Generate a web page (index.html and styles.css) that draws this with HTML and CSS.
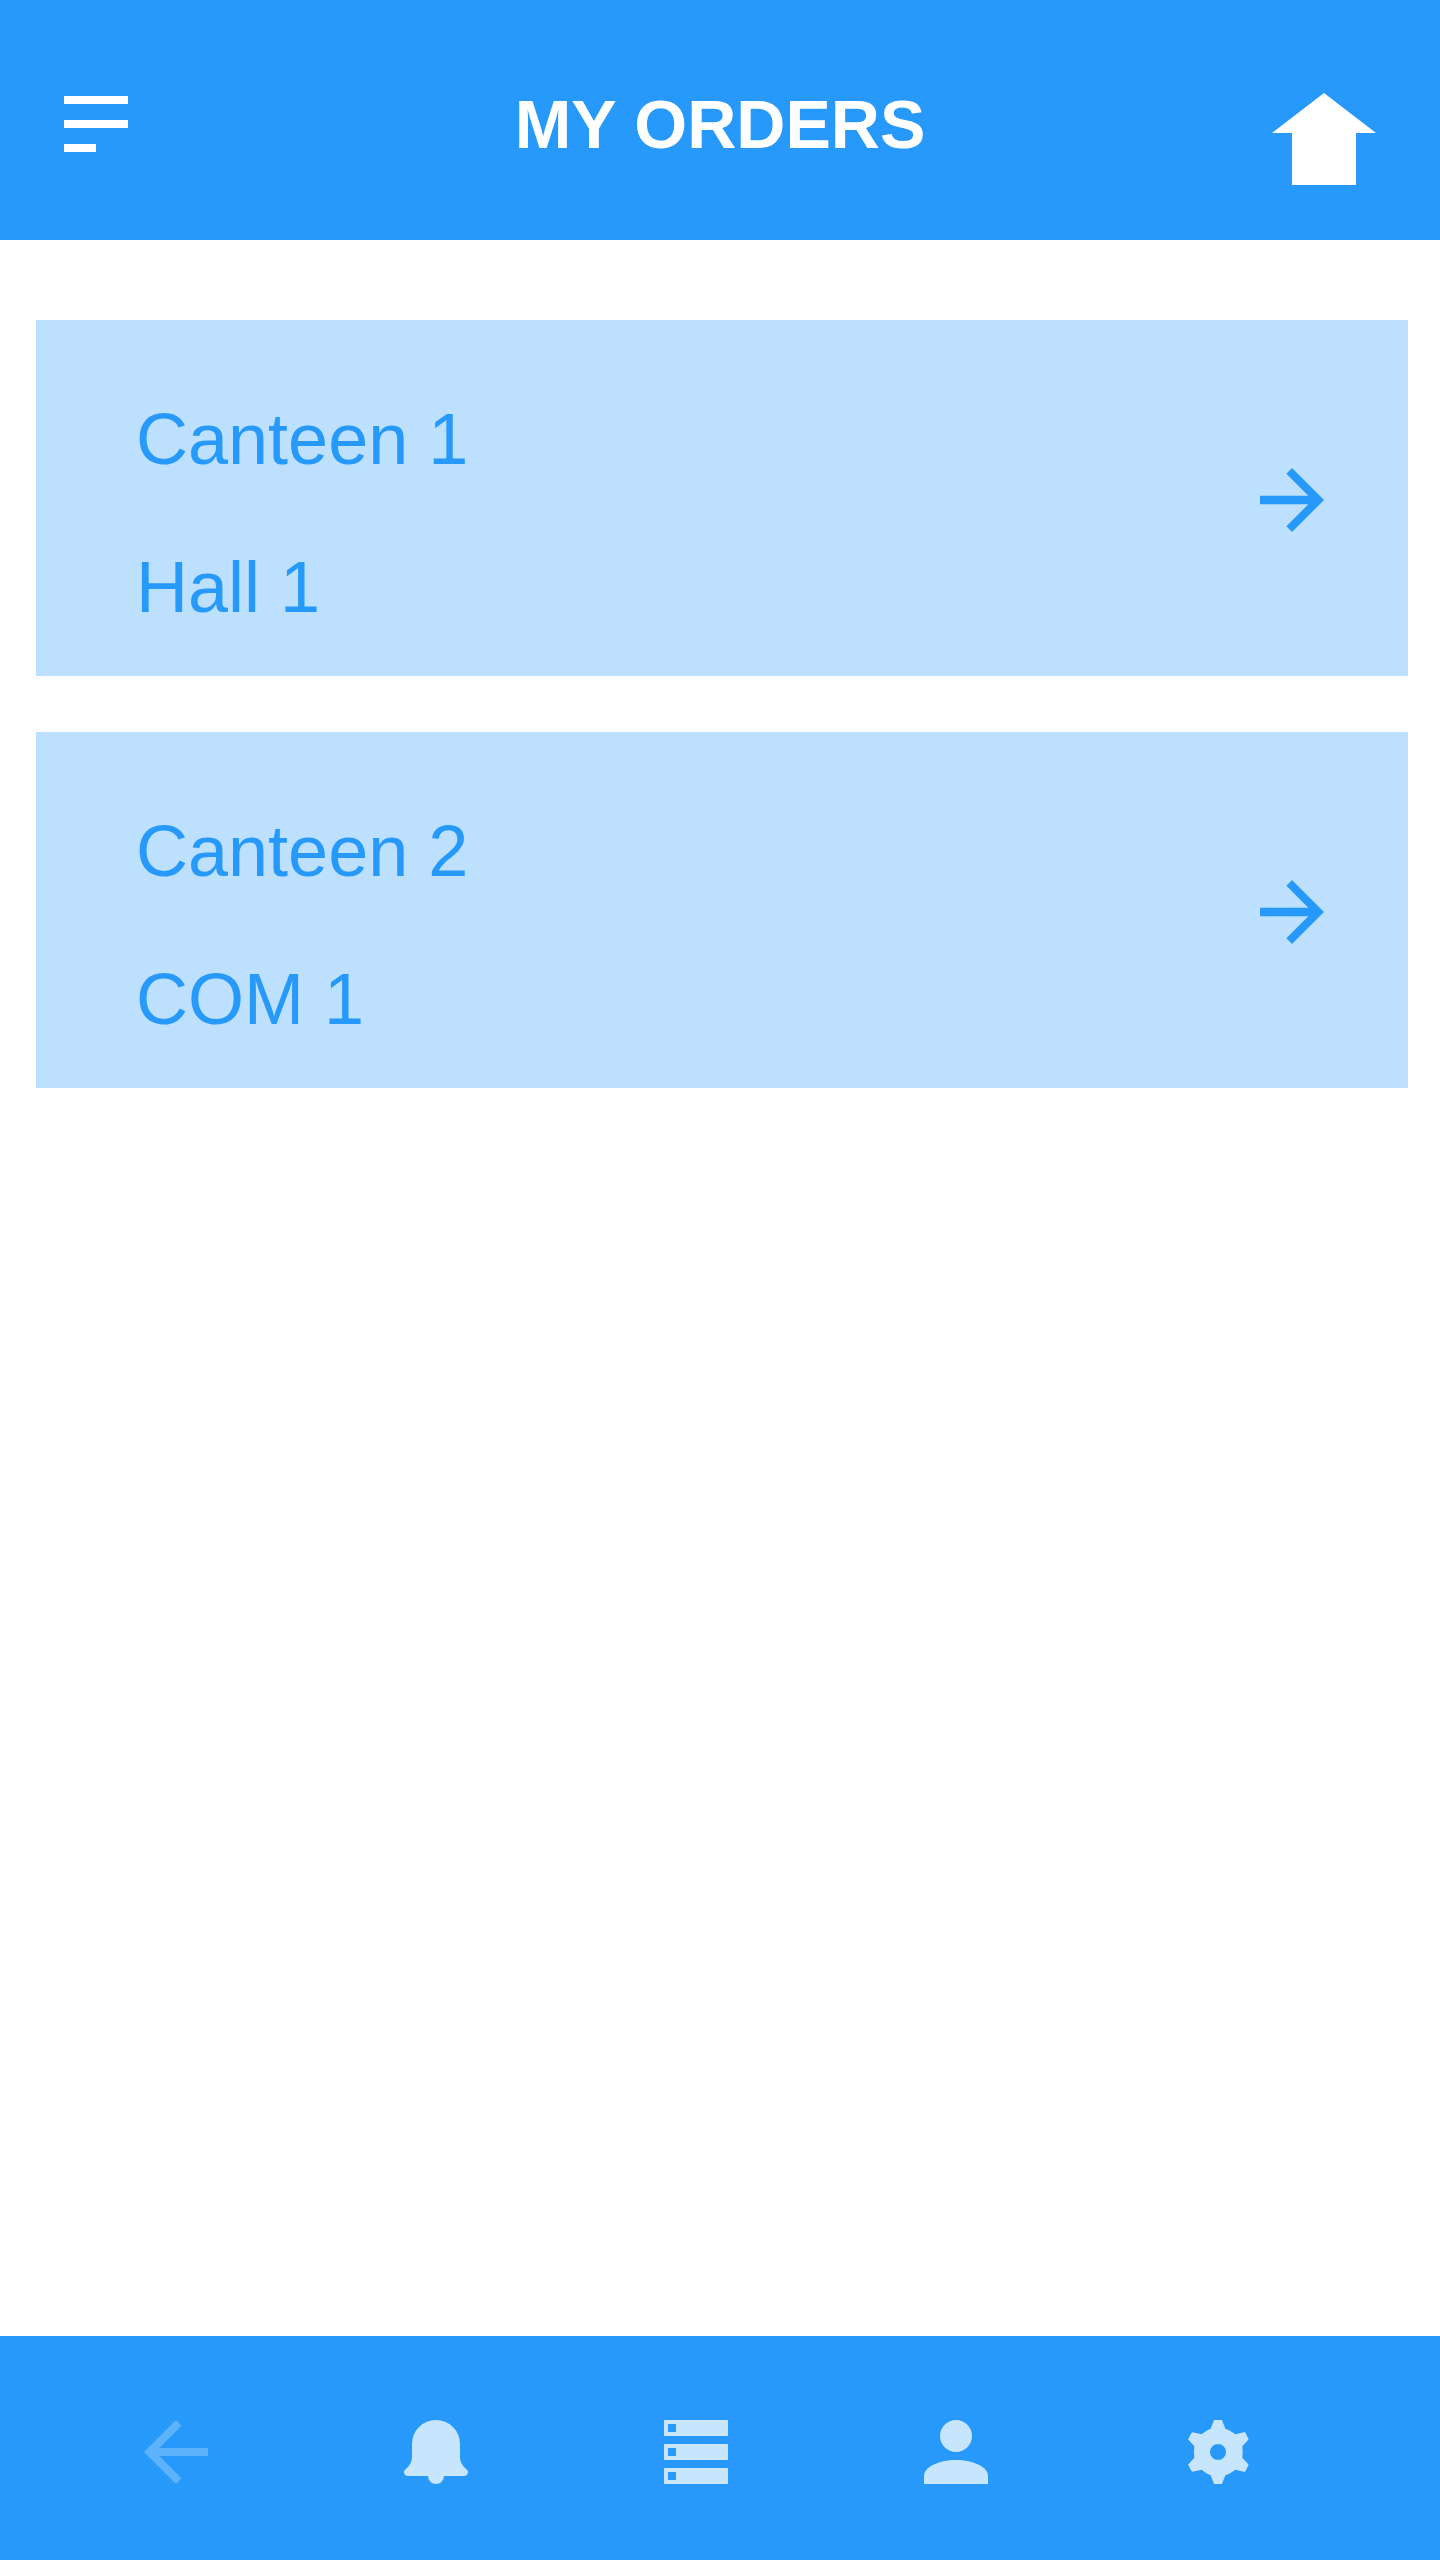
FILE: index.html
```
<!DOCTYPE html>
<html lang="en">
<head>
<meta charset="utf-8">
<title>My Orders</title>
<link rel="stylesheet" href="styles.css">
</head>
<body>
<div class="app">
  <header class="header">
    <svg class="menu-icon" viewBox="0 0 64 56" aria-label="Menu"><path d="M0 0h64v8H0zM0 24h64v8H0zM0 48h32v8H0z"/></svg>
    <h1 class="title">MY ORDERS</h1>
    <svg class="home-icon" viewBox="0 0 104 92" aria-label="Home"><path d="M52 0l52 40H84v52H20V40H0z"/></svg>
  </header>
  <main class="orders">
    <a class="card">
      <div class="card-text"><p class="line">Canteen 1</p><p class="line">Hall 1</p></div>
      <svg class="icon arrow" viewBox="0 0 24 24"><path d="M12 4l-1.41 1.41L16.08 10.92H4v2.16h12.08l-5.49 5.51L12 20l8-8z"/></svg>
    </a>
    <a class="card">
      <div class="card-text"><p class="line">Canteen 2</p><p class="line">COM 1</p></div>
      <svg class="icon arrow" viewBox="0 0 24 24"><path d="M12 4l-1.41 1.41L16.08 10.92H4v2.16h12.08l-5.49 5.51L12 20l8-8z"/></svg>
    </a>
  </main>
  <nav class="tabs">
    <svg class="icon tab tab-disabled" viewBox="0 0 24 24" aria-label="Back"><path d="M20 11H7.83l5.59-5.59L12 4l-8 8 8 8 1.41-1.41L7.83 13H20z"/></svg>
    <svg class="icon tab" viewBox="0 0 24 24" aria-label="Notifications"><path d="M12 4a6 6 0 0 0-6 6v3.3c0 1.1-.55 2.05-1.35 2.75l-.3.25C3.65 16.95 4.05 18 5 18h5a2 2 0 0 0 4 0h5c.95 0 1.35-1.05.65-1.7l-.3-.25C18.55 15.35 18 14.4 18 13.3V10a6 6 0 0 0-6-6z"/></svg>
    <svg class="icon tab" viewBox="0 0 24 24" aria-label="Orders"><path fill-rule="evenodd" d="M4 4h16v4H4zM5 5v2h2V5zM4 10h16v4H4zM5 11v2h2v-2zM4 16h16v4H4zM5 17v2h2v-2z"/></svg>
    <svg class="icon tab" viewBox="0 0 24 24" aria-label="Profile"><circle cx="12" cy="8" r="4"/><path d="M12 14c-4.42 0-8 1.79-8 4v2h16v-2c0-2.21-3.58-4-8-4z"/></svg>
    <svg class="icon tab" viewBox="-150 -144 288 288" aria-label="Settings"><path fill-rule="evenodd" d="M-12-96H12L22-70Q38-65 52-53L81-60 92-38 73-17Q75 0 73 17L92 38 81 60 52 53Q38 65 22 70L12 96H-12L-22 70Q-36 65-49 53L-78 59-90 38-71 17Q-73 0-71-17L-90-38-78-59-49-53Q-36-65-22-70zM0-24a24 24 0 1 0 0 48 24 24 0 0 0 0-48z"/></svg>
  </nav>
</div>
</body>
</html>
```
FILE: styles.css
```
* { box-sizing: border-box; margin: 0; padding: 0; }
body {
  background: #fff;
  font-family: Arial, "Liberation Sans", sans-serif;
}
.app {
  width: 1440px;
  height: 2560px;
  display: flex;
  flex-direction: column;
}
.header {
  height: 240px;
  padding: 93px 64px 0;
  display: grid;
  grid-template-columns: 1fr auto 1fr;
  align-items: start;
  background: #2699fb;
  color: #fff;
}
.menu-icon { width: 64px; height: 56px; margin-top: 3px; fill: #fff; }
.home-icon { width: 104px; height: 92px; justify-self: end; fill: #fff; }
.title {
  font-size: 68px;
  line-height: 80px;
  font-weight: 700;
  margin-top: -9px;
  white-space: nowrap;
}
.orders {
  flex: 1;
  padding: 80px 32px 0 36px;
  display: flex;
  flex-direction: column;
  gap: 56px;
}
.card {
  height: 356px;
  padding: 45px 68px 0 100px;
  display: flex;
  justify-content: space-between;
  align-items: flex-start;
  background: #bce0fd;
  color: #2699fb;
}
.line { font-size: 72px; line-height: 148px; white-space: nowrap; }
.icon { width: 96px; height: 96px; flex: none; }
.arrow { margin-top: 87px; fill: #2699fb; }
.tabs {
  height: 224px;
  padding: 68px 176px 0 128px;
  display: flex;
  justify-content: space-between;
  background: #2699fb;
}
.tab { fill: #fff; opacity: .75; }
.tab-disabled { opacity: .25; }
```
